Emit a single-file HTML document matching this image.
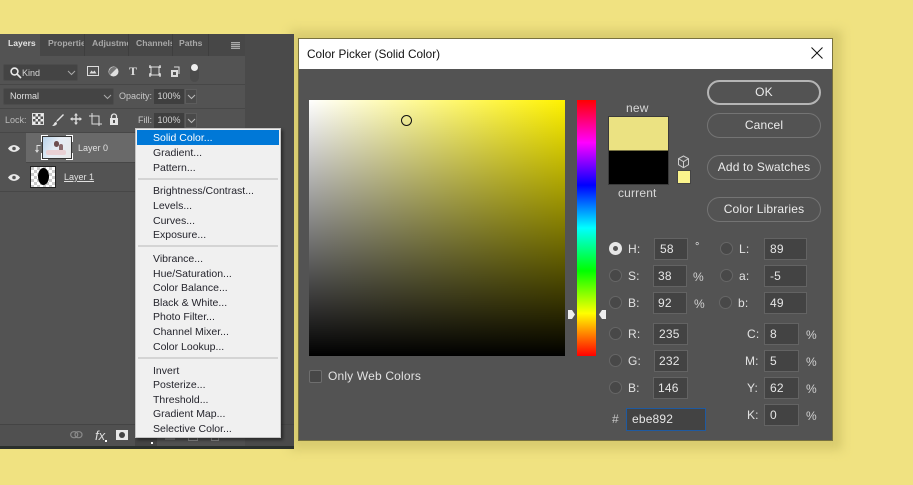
<!DOCTYPE html>
<html><head><meta charset="utf-8">
<style>
html,body{margin:0;padding:0;width:913px;height:485px;overflow:hidden;background:#f0e281;font-family:"Liberation Sans",sans-serif}
div,span,svg{position:absolute;box-sizing:border-box}
.t{white-space:nowrap;line-height:14px}
.p{color:#d6d6d6;font-size:9px;font-weight:normal}
.h{font-size:8.6px;font-weight:bold;color:#a8a8a8}
.m{color:#24242c;font-size:10.5px;left:153px;margin-top:1px}
.sep{left:138px;width:140px;height:2px;background:#d4d4d4}
.d{color:#e2e2e2;font-size:12px;letter-spacing:.17px}
.f{background:#434343;border:1px solid #636363;height:22px;color:#e6e6e6;font-size:12px;line-height:20px;letter-spacing:.17px}
.r{width:13px;height:13px;border-radius:50%;background:#484848;border:1px solid #666}
.b{left:707px;width:114px;height:25px;border-radius:13px;border:1px solid #747474;color:#ececec;font-size:12px;letter-spacing:.17px;text-align:center;line-height:23px}
.dd{background:#444;border:1px solid #4c4c4c;border-radius:2px}
.bx{background:#3f3f3f;height:15px;color:#d6d6d6;font-size:9px;line-height:15px;text-align:center}
</style></head><body>

<!-- dialog glow -->
<div style="left:290px;top:30px;width:552px;height:420px;background:#d8cb6e;filter:blur(5px)"></div>

<!-- layers panel -->
<div style="left:0;top:34px;width:294px;height:415px;background:#4a4a4a"></div>
<div style="left:0;top:34px;width:245px;height:390px;background:#535353"></div>
<div style="left:0;top:34px;width:245px;height:22px;background:#474747"></div>
<div style="left:0;top:34px;width:40px;height:23px;background:#535353"></div>
<div style="left:84px;top:34px;width:1px;height:22px;background:#3e3e3e"></div>
<div style="left:128px;top:34px;width:1px;height:22px;background:#3e3e3e"></div>
<div style="left:172px;top:34px;width:1px;height:22px;background:#3e3e3e"></div>
<div style="left:208px;top:34px;width:1px;height:22px;background:#3e3e3e"></div>
<div class="t h" style="left:8px;top:36px;color:#e4e4e4">Layers</div>
<div class="t h" style="left:48px;top:36px;width:36px;overflow:hidden">Properties</div>
<div class="t h" style="left:92px;top:36px;width:36px;overflow:hidden">Adjustments</div>
<div class="t h" style="left:136px;top:36px;width:36px;overflow:hidden">Channels</div>
<div class="t h" style="left:179px;top:36px">Paths</div>
<div style="left:231px;top:42px;width:9px;height:7px;background:repeating-linear-gradient(#aaa 0 1px,#666 1px 2px)"></div>

<!-- filter row -->
<div class="dd" style="left:3px;top:64px;width:75px;height:17px"></div>
<svg style="left:9px;top:66px" width="13" height="13" viewBox="0 0 13 13" fill="none" stroke="#e8e8e8" stroke-width="1.6"><circle cx="5.5" cy="5.5" r="3.4"/><path d="M8 8l4 4"/></svg>
<div class="t p" style="left:22px;top:66px">Kind</div>
<svg style="left:67px;top:70px" width="9" height="6" fill="none" stroke="#aaa"><path d="M1 1l3.5 3.5L8 1"/></svg>
<svg style="left:87px;top:65px" width="12" height="12" viewBox="0 0 12 12" fill="none" stroke="#ddd"><rect x=".5" y="1.5" width="11" height="9"/><path d="M2.5 8.5l2-3 1.5 1.5 1.5-1.5 2 3z" fill="#ddd" stroke="none"/></svg>
<svg style="left:108px;top:66px" width="11" height="11" viewBox="0 0 11 11"><circle cx="5.5" cy="5.5" r="5" fill="#e0e0e0"/><path d="M2 9L9 2A5 5 0 0 0 2 9z" fill="#777"/></svg>
<div class="t" style="left:129px;top:64px;color:#ddd;font:bold 12px/14px 'Liberation Serif',serif">T</div>
<svg style="left:149px;top:65px" width="12" height="12" viewBox="0 0 12 12" fill="none" stroke="#ddd"><rect x="2" y="2" width="8" height="8"/><path d="M0 2h3M1 0v3M9 2h3M11 0v3M0 10h3M1 8v4M9 10h3M11 8v4" stroke-width="1.2"/></svg>
<svg style="left:170px;top:65px" width="11" height="12" viewBox="0 0 11 12"><path d="M1 5h7v7H1z" fill="#ddd"/><path d="M4 2h5v7" fill="none" stroke="#ddd"/><rect x="3" y="7" width="3" height="3" fill="#555"/></svg>
<div style="left:190px;top:64px;width:9px;height:18px;border-radius:5px;background:#4b4b4b"></div>
<div style="left:191px;top:64px;width:7px;height:7px;border-radius:50%;background:#eee"></div>

<!-- blend row -->
<div class="dd" style="left:3px;top:88px;width:111px;height:17px"></div>
<div class="t p" style="left:10px;top:89px;color:#e0e0e0">Normal</div>
<svg style="left:103px;top:94px" width="9" height="6" fill="none" stroke="#aaa"><path d="M1 1l3.5 3.5L8 1"/></svg>
<div class="t p" style="left:119px;top:89px;color:#c8c8c8">Opacity:</div>
<div class="bx" style="left:154px;top:89px;width:30px">100%</div>
<div style="left:185px;top:89px;width:12px;height:15px;background:#4a4a4a;border:1px solid #5c5c5c"></div>
<svg style="left:187px;top:94px" width="9" height="6" fill="none" stroke="#bbb"><path d="M1 1l3.5 3.5L8 1"/></svg>

<!-- lock row -->
<div style="left:0;top:84px;width:245px;height:1px;background:#474747"></div>
<div style="left:0;top:108px;width:245px;height:1px;background:#474747"></div>
<div class="t p" style="left:5px;top:113px;color:#bbb">Lock:</div>
<div style="left:33px;top:114px;width:10px;height:10px;background:conic-gradient(#eee 25%,#555 0 50%,#eee 0 75%,#555 0) 0 0/5px 5px;outline:1px solid #ddd"></div>
<svg style="left:51px;top:113px" width="13" height="14" viewBox="0 0 13 14"><path d="M12 1L6 7 5 9l2-1 6-6zM5 9c-2 0-2 3-4 4 3 0 5-1 5-3z" fill="#e4e4e4"/></svg>
<svg style="left:70px;top:113px" width="12" height="12" viewBox="0 0 12 12"><path d="M6 0l2 2.500H6.700V5.300H9.500V4L12 6 9.500 8V6.700H6.700V9.500H8L6 12 4 9.500H5.300V6.700H2.500V8L0 6 2.500 4V5.300H5.300V2.500H4z" fill="#ddd"/></svg>
<svg style="left:89px;top:113px" width="13" height="13" viewBox="0 0 13 13" fill="none" stroke="#ddd"><path d="M3 0v11h10M0 3h10v10"/></svg>
<svg style="left:109px;top:113px" width="10" height="12" viewBox="0 0 10 12"><path d="M2.500 5V3.500a2.500 2.500 0 0 1 5 0V5" fill="none" stroke="#e4e4e4" stroke-width="1.300"/><rect x="1" y="5" width="8" height="7" fill="#e4e4e4"/><rect x="4" y="7" width="2" height="3" fill="#555"/></svg>
<div class="t p" style="left:138px;top:113px;color:#c8c8c8">Fill:</div>
<div class="bx" style="left:154px;top:113px;width:30px">100%</div>
<div style="left:185px;top:113px;width:12px;height:15px;background:#4a4a4a;border:1px solid #5c5c5c"></div>
<svg style="left:187px;top:118px" width="9" height="6" fill="none" stroke="#bbb"><path d="M1 1l3.5 3.5L8 1"/></svg>

<!-- layer rows -->
<div style="left:0;top:132px;width:245px;height:1px;background:#474747"></div>
<div style="left:26px;top:133px;width:219px;height:29px;background:#696969"></div>
<div style="left:0;top:162px;width:245px;height:1px;background:#474747"></div>
<div style="left:0;top:191px;width:245px;height:1px;background:#474747"></div>
<div style="left:0;top:133px;width:26px;height:58px;background:#535353"></div>
<svg style="left:8px;top:144px" width="12" height="9" viewBox="0 0 12 9"><path d="M0 4.500C3 0 9 0 12 4.500 9 9 3 9 0 4.500z" fill="#e8e8e8"/><circle cx="6" cy="4.500" r="1.800" fill="#555"/></svg>
<svg style="left:8px;top:173px" width="12" height="9" viewBox="0 0 12 9"><path d="M0 4.500C3 0 9 0 12 4.500 9 9 3 9 0 4.500z" fill="#e8e8e8"/><circle cx="6" cy="4.500" r="1.800" fill="#555"/></svg>
<svg style="left:35px;top:144px" width="6" height="9" viewBox="0 0 6 9" fill="none" stroke="#ddd"><path d="M5.500 1.500H2v6M.5 6L2 8 3.500 6"/></svg>
<div style="left:42px;top:136px;width:30px;height:23px;background:linear-gradient(120deg,#b9d3ea,#e6edf5 45%,#e8e8e8);border:1px solid #333"></div>
<div style="left:54px;top:141px;width:5px;height:6px;border-radius:3px;background:#6e4f50"></div>
<div style="left:59px;top:144px;width:4px;height:7px;border-radius:2px;background:#8a6a6c"></div>
<div style="left:46px;top:150px;width:20px;height:5px;border-radius:2px;background:#e8d0d4"></div>
<svg style="left:41px;top:135px" width="32" height="25" fill="none" stroke="#fff"><path d="M.5 7V.5H7M25 .5h6.500V7M.5 18v6.500H7M25 24.500h6.500V18"/></svg>
<div class="t p" style="left:78px;top:141px;color:#e0e0e0">Layer 0</div>
<div style="left:30px;top:166px;width:26px;height:22px;background:conic-gradient(#fff 25%,#ccc 0 50%,#fff 0 75%,#ccc 0) 0 0/6px 6px;border:1px solid #222"></div>
<div style="left:38px;top:168px;width:11px;height:17px;border-radius:50%;background:#000"></div>
<div class="t p" style="left:64px;top:170px;color:#e0e0e0;text-decoration:underline">Layer 1</div>

<!-- bottom bar -->
<div style="left:0;top:424px;width:294px;height:1px;background:#444"></div>
<div style="left:0;top:425px;width:245px;height:21px;background:#505050"></div>
<div style="left:0;top:446px;width:294px;height:3px;background:#2a2f2c"></div>
<svg style="left:70px;top:431px" width="13" height="8" fill="none" stroke="#8a8a8a" stroke-width="1.200"><rect x=".7" y=".7" width="7" height="6" rx="3"/><rect x="5" y=".7" width="7" height="6" rx="3"/></svg>
<div class="t" style="left:95px;top:428px;color:#ddd;font:italic 13px/15px 'Liberation Sans',sans-serif">fx</div>
<div style="left:105px;top:440px;width:2px;height:2px;background:#fff"></div>
<div style="left:116px;top:430px;width:12px;height:10px;background:#e8e8e8"></div>
<div style="left:119px;top:432px;width:6px;height:6px;border-radius:50%;background:#444"></div>
<div style="left:135px;top:430px;width:22px;height:16px;background:#444"></div>
<div style="left:151px;top:442px;width:2px;height:2px;background:#fff"></div>
<div style="left:165px;top:438px;width:10px;height:2px;background:#777"></div>
<div style="left:188px;top:438px;width:10px;height:3px;border:1px solid #888;border-top:0"></div>
<div style="left:211px;top:438px;width:8px;height:3px;border:1px solid #888;border-top:0"></div>

<!-- menu -->
<div style="left:135px;top:128px;width:146px;height:310px;background:#f0f0f0;border:1px solid #c4c4c4;box-shadow:2px 2px 3px rgba(0,0,0,.45)"></div>
<div style="left:137px;top:130px;width:142px;height:15px;background:#0078d7"></div>
<div class="t m" style="top:130px;color:#fff">Solid Color...</div>
<div class="t m" style="top:145px">Gradient...</div>
<div class="t m" style="top:160px">Pattern...</div>
<div class="sep" style="top:178px"></div>
<div class="t m" style="top:183px">Brightness/Contrast...</div>
<div class="t m" style="top:198px">Levels...</div>
<div class="t m" style="top:213px">Curves...</div>
<div class="t m" style="top:227px">Exposure...</div>
<div class="sep" style="top:245px"></div>
<div class="t m" style="top:251px">Vibrance...</div>
<div class="t m" style="top:266px">Hue/Saturation...</div>
<div class="t m" style="top:280px">Color Balance...</div>
<div class="t m" style="top:295px">Black &amp; White...</div>
<div class="t m" style="top:309px">Photo Filter...</div>
<div class="t m" style="top:324px">Channel Mixer...</div>
<div class="t m" style="top:339px">Color Lookup...</div>
<div class="sep" style="top:357px"></div>
<div class="t m" style="top:363px">Invert</div>
<div class="t m" style="top:377px">Posterize...</div>
<div class="t m" style="top:392px">Threshold...</div>
<div class="t m" style="top:406px">Gradient Map...</div>
<div class="t m" style="top:421px">Selective Color...</div>

<!-- dialog -->
<div style="left:298px;top:38px;width:535px;height:403px;background:#535353;border:1px solid #77713f"></div>
<div style="left:299px;top:39px;width:533px;height:30px;background:#fff"></div>
<div class="t" style="left:307px;top:47px;color:#111;font-size:11.8px">Color Picker (Solid Color)</div>
<svg style="left:811px;top:47px" width="12" height="12" fill="none" stroke="#111" stroke-width="1"><path d="M.5.5l11 11M11.500.5l-11 11"/></svg>

<!-- SB field -->
<div style="left:309px;top:100px;width:256px;height:256px;background:linear-gradient(to top,#000,rgba(0,0,0,0)),linear-gradient(to right,#fff,#fff200)"></div>
<div style="left:401px;top:115px;width:11px;height:11px;border-radius:50%;border:1px solid #111"></div>

<!-- hue -->
<div style="left:577px;top:100px;width:19px;height:256px;background:linear-gradient(to bottom,#f00,#f0f 16.700%,#00f 33.300%,#0ff 50%,#0f0 66.700%,#ff0 83.300%,#f00)"></div>
<svg style="left:567px;top:309px" width="40" height="11"><path d="M1 1h4l3 4.500-3 4.500H1z" fill="#eee"/><path d="M39 1h-4l-3 4.500 3 4.500h4z" fill="#eee"/></svg>

<!-- swatch -->
<div class="t d" style="left:626px;top:101px;color:#d8d8d8">new</div>
<div style="left:608px;top:116px;width:61px;height:69px;border:1px solid #3a3a3a;background:linear-gradient(#ebe282 50%,#000 50%)"></div>
<div class="t d" style="left:618px;top:186px;color:#d8d8d8">current</div>
<svg style="left:677px;top:155px" width="13" height="14" viewBox="0 0 13 14" fill="none" stroke="#ccc"><path d="M6.500 1l5 2.700v6l-5 3-5-3v-6zM1.500 3.700l5 3 5-3M6.500 6.700V13"/></svg>
<div style="left:677px;top:170px;width:14px;height:14px;background:#fbf48c;border:1px solid #444"></div>

<!-- buttons -->
<div class="b" style="top:80px;border:2px solid #b5b5b5;line-height:21px">OK</div>
<div class="b" style="top:113px">Cancel</div>
<div class="b" style="top:155px">Add to Swatches</div>
<div class="b" style="top:197px">Color Libraries</div>

<!-- radios HSB -->
<div class="r" style="left:609px;top:242px;background:#e6e6e6;border-color:#e6e6e6"></div>
<div style="left:613px;top:246px;width:5px;height:5px;border-radius:50%;background:#555"></div>
<div class="r" style="left:609px;top:269px"></div>
<div class="r" style="left:609px;top:296px"></div>
<div class="r" style="left:609px;top:327px"></div>
<div class="r" style="left:609px;top:354px"></div>
<div class="r" style="left:609px;top:381px"></div>
<div class="r" style="left:720px;top:242px"></div>
<div class="r" style="left:720px;top:269px"></div>
<div class="r" style="left:719px;top:296px"></div>

<div class="t d" style="left:628px;top:242px">H:</div>
<div class="t d" style="left:628px;top:269px">S:</div>
<div class="t d" style="left:628px;top:296px">B:</div>
<div class="t d" style="left:628px;top:327px">R:</div>
<div class="t d" style="left:628px;top:354px">G:</div>
<div class="t d" style="left:628px;top:381px">B:</div>
<div class="t d" style="left:739px;top:242px">L:</div>
<div class="t d" style="left:739px;top:269px">a:</div>
<div class="t d" style="left:738px;top:296px">b:</div>
<div class="t d" style="left:747px;top:327px">C:</div>
<div class="t d" style="left:745px;top:354px">M:</div>
<div class="t d" style="left:747px;top:381px">Y:</div>
<div class="t d" style="left:747px;top:408px">K:</div>

<div class="f" style="left:654px;top:238px;width:34px;padding-left:5px">58</div>
<div class="f" style="left:653px;top:265px;width:34px;padding-left:4px">38</div>
<div class="f" style="left:653px;top:292px;width:34px;padding-left:4px">92</div>
<div class="f" style="left:653px;top:323px;width:35px;padding-left:5px">235</div>
<div class="f" style="left:654px;top:350px;width:34px;padding-left:4px">232</div>
<div class="f" style="left:653px;top:377px;width:35px;padding-left:4px">146</div>
<div class="f" style="left:764px;top:238px;width:43px;padding-left:5px">89</div>
<div class="f" style="left:764px;top:265px;width:43px;padding-left:5px">-5</div>
<div class="f" style="left:764px;top:292px;width:43px;padding-left:5px">49</div>
<div class="f" style="left:764px;top:323px;width:35px;padding-left:5px">8</div>
<div class="f" style="left:764px;top:350px;width:35px;padding-left:5px">5</div>
<div class="f" style="left:764px;top:377px;width:35px;padding-left:5px">62</div>
<div class="f" style="left:764px;top:404px;width:35px;padding-left:5px">0</div>

<div class="t d" style="left:695px;top:240px;font-size:11px">°</div>
<div class="t d" style="left:693px;top:270px;color:#d0d0d0">%</div>
<div class="t d" style="left:694px;top:297px;color:#d0d0d0">%</div>
<div class="t d" style="left:806px;top:328px;color:#d0d0d0">%</div>
<div class="t d" style="left:806px;top:355px;color:#d0d0d0">%</div>
<div class="t d" style="left:806px;top:382px;color:#d0d0d0">%</div>
<div class="t d" style="left:806px;top:409px;color:#d0d0d0">%</div>

<div class="t d" style="left:612px;top:412px;color:#c8c8c8">#</div>
<div class="f" style="left:626px;top:408px;width:80px;height:23px;border:1px solid #1f5aa0;padding-left:5px">ebe892</div>

<!-- only web colors -->
<div style="left:309px;top:370px;width:13px;height:13px;background:#474747;border:1px solid #6e6e6e;border-radius:2px"></div>
<div class="t d" style="left:328px;top:369px">Only Web Colors</div>

</body></html>
